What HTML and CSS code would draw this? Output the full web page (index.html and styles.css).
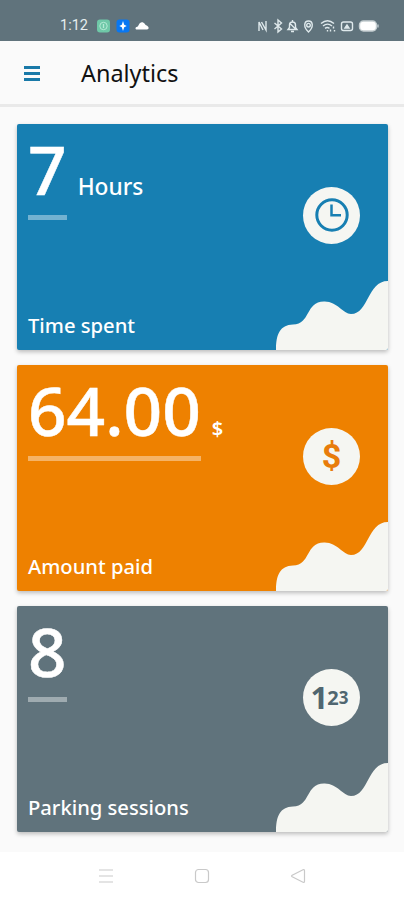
FILE: index.html
```html
<!DOCTYPE html>
<html lang="en">
<head>
    <meta charset="UTF-8">
    <meta name="viewport" content="width=device-width, initial-scale=1.0">
    <title>Analytics</title>
    <link rel="stylesheet" href="styles.css">
</head>
<body>
    <div class="status-bar">
        <span class="time">1:12</span>
        <svg class="status-left" width="54" height="16" viewBox="0 0 54 16">
            <rect x="1" y="1.5" width="13" height="13" rx="3" fill="#6fc8a8"/>
            <circle cx="7.5" cy="8" r="3.7" fill="none" stroke="#b5ead5"/>
            <path d="M7.5 6v4" stroke="#b5ead5" stroke-width="1.3"/>
            <rect x="20.5" y="1.5" width="13" height="13" rx="3" fill="#0877f2"/>
            <path d="M27 3l1.200 3.700 2.500 1.300-2.500 1.300-1.200 3.700-1.200-3.700-2.500-1.300 2.500-1.300z" fill="#fff"/>
            <path d="M41 11.500c-2 0-2-2.500.3-2.800 1.200-.2 1.700-4.400 4.600-4.400 2.500 0 3 2.500 4.200 3 3.200 1.200 3.200 4.200.9 4.200z" fill="#fff"/>
        </svg>
        <svg class="status-right" width="124" height="16" viewBox="0 0 124 16" fill="none" stroke="#dfe9ec" stroke-width="1.4">
            <path d="M2 13V4l4 8M4.500 4l4.500 8V3"/>
            <path d="M17.500 5l7 6-3.500 3V2l3.500 3-7 6"/>
            <path d="M31 11.500h9l-1.500-2V7c0-4-6-4-6 0v2.500zM35.500 2v1.500M34 13.500h3M32.500 5l6 6"/>
            <path d="M51.500 14c-5.500-5-4.500-11 0-11s5.500 6 0 11z"/>
            <circle cx="51.500" cy="7.200" r="1.800"/>
            <path d="M64 5.500c4-3.500 9-3.500 13 0M66 8c3-2.500 6-2.500 9 0M68 10.300c1.500-1 3-1 4.500 0M70.500 12v1.500M76.500 8.500v2M73.500 11.500v2M77.500 12v1.500"/>
            <rect x="84.500" y="4" width="11" height="8.500" rx="2"/>
            <path d="M88 10l2-3 2 3z" fill="#dfe9ec"/>
            <rect x="102.500" y="3" width="17" height="10" rx="4" fill="#fff" stroke="#c5ced1"/>
            <path d="M121 6.500v3" stroke-width="1"/>
        </svg>
    </div>

    <header class="toolbar">
        <div class="menu"><span></span><span></span><span></span></div>
        <h1>Analytics</h1>
    </header>

    <main class="cards">
        <section class="card blue">
            <div class="amount"><span class="number">7</span><span class="unit">Hours</span></div>
            <p class="label">Time spent</p>
            <div class="badge">
                <svg width="34" height="34" viewBox="0 0 34 34" fill="none" stroke="currentColor">
                    <circle cx="17" cy="17" r="15.2" stroke-width="3"/>
                    <path d="M16.500 6.500v10.700h9.500" stroke-width="2.500"/>
                </svg>
            </div>
            <svg class="wave" width="112" height="69" viewBox="0 0 112 69">
                <path d="M0 69C0 53 4 44 17 43.500C35 43 29 21 48 20.500C61 20 67 33 75 33C93 33 91 0 112 0V69z"/>
            </svg>
        </section>

        <section class="card orange">
            <div class="amount"><span class="number">64.00</span><span class="unit small">$</span></div>
            <p class="label">Amount paid</p>
            <div class="badge dollar">$</div>
            <svg class="wave" width="112" height="69" viewBox="0 0 112 69">
                <path d="M0 69C0 53 4 44 17 43.500C35 43 29 21 48 20.500C61 20 67 33 75 33C93 33 91 0 112 0V69z"/>
            </svg>
        </section>

        <section class="card grey">
            <div class="amount"><span class="number">8</span></div>
            <p class="label">Parking sessions</p>
            <div class="badge count"><span class="one">1</span><span class="two">2</span><span class="three">3</span></div>
            <svg class="wave" width="112" height="69" viewBox="0 0 112 69">
                <path d="M0 69C0 53 4 44 17 43.500C35 43 29 21 48 20.500C61 20 67 33 75 33C93 33 91 0 112 0V69z"/>
            </svg>
        </section>
    </main>

    <nav class="nav-bar">
        <svg width="16" height="16" viewBox="0 0 16 16"><path d="M1 2h14M1 8h14M1 14h14"/></svg>
        <svg width="16" height="16" viewBox="0 0 16 16"><rect x="1.5" y="1.5" width="13" height="13" rx="3"/></svg>
        <svg width="16" height="16" viewBox="0 0 16 16"><path d="M13 1.700L2.200 7.200q-1.200.8 0 1.600L13 14.300q1.500.5 1.500-1V2.700q0-1.500-1.500-1z"/></svg>
    </nav>
</body>
</html>
```
FILE: styles.css
```css
* {
    box-sizing: border-box;
}
body {
    margin: 0;
    height: 900px;
    display: flex;
    flex-direction: column;
    font-family: "Noto Sans", "Open Sans", sans-serif;
    background-color: #fafafa;
    overflow: hidden;
}
.status-bar {
    height: 41px;
    background-color: #60737c;
    color: #e6eef0;
    display: flex;
    align-items: center;
    padding: 11px 23px 0 60px;
}
.time {
    width: 36px;
    font-family: Roboto, sans-serif;
    font-size: 14.5px;
    line-height: 16px;
}
.status-right {
    margin-left: auto;
}
.toolbar {
    height: 66px;
    display: flex;
    align-items: center;
    padding-left: 24px;
    border-bottom: 3px solid #e9e9e9;
}
.menu {
    width: 16px;
    display: flex;
    flex-direction: column;
    gap: 3px;
    padding-top: 2px;
}
.menu span {
    height: 3px;
    background-color: #1979a8;
}
h1 {
    margin: 0 0 0 41px;
    font-size: 23.4px;
    font-weight: 400;
    line-height: 30px;
    color: #111;
}
.cards {
    flex: 1;
    display: flex;
    flex-direction: column;
    gap: 15.3px;
    padding: 16.5px 16px 0 17px;
}
.card {
    position: relative;
    height: 226px;
    flex: none;
    display: flex;
    flex-direction: column;
    justify-content: space-between;
    padding: 13px 11px 10px;
    border-radius: 2px;
    overflow: hidden;
    box-shadow: 0 2px 4px rgba(0,0,0,0.25);
    color: #fff;
}
.blue {
    background-color: #177fb2;
}
.orange {
    background-color: #ee8100;
}
.grey {
    background-color: #60737c;
}
.amount {
    display: flex;
    align-items: baseline;
    gap: 11px;
}
.number {
    height: 83px;
    border-bottom: 5px solid rgba(255,255,255,0.4);
    font-size: 67.5px;
    font-weight: 500;
    line-height: 65px;
    -webkit-text-stroke: 0.5px #fff;
}
.unit {
    font-size: 22.7px;
    font-weight: 500;
}
.small {
    font-size: 20px;
    font-weight: 600;
}
.label {
    margin: 0;
    font-size: 20.2px;
    font-weight: 500;
    line-height: 30px;
}
.badge {
    position: absolute;
    right: 28px;
    top: 63px;
    width: 57px;
    height: 57px;
    border-radius: 50%;
    background-color: #f5f6f2;
    display: flex;
    align-items: center;
    justify-content: center;
}
.blue .badge {
    color: #177fb2;
}
.dollar {
    color: #e87c0b;
    font-family: Roboto, sans-serif;
    font-size: 34px;
    font-weight: 700;
}
.count {
    color: #506670;
    font-weight: 700;
    line-height: 1;
}
.one {
    margin-left: -4px;
    font-size: 31px;
}
.two {
    margin-left: -1px;
    font-size: 20px;
}
.three {
    font-size: 17px;
}
.wave {
    position: absolute;
    right: 0;
    bottom: 0;
    fill: #f5f6f2;
}
.nav-bar {
    height: 48px;
    background-color: #fff;
    display: flex;
    justify-content: center;
    align-items: center;
    gap: 80px;
    fill: none;
    stroke: #c9c9c9;
    stroke-width: 1.2;
}
```
